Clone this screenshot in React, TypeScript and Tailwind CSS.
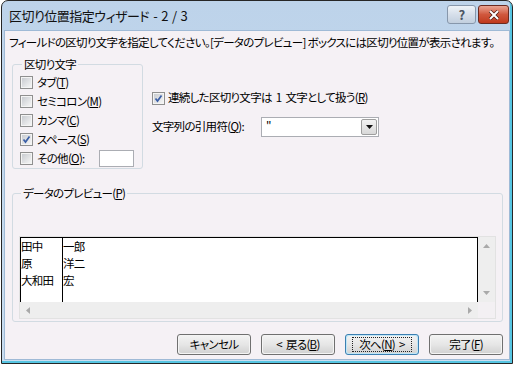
import React from "react";

const F = "font-['Noto_Sans_CJK_JP',sans-serif] [font-feature-settings:'palt']";

function Check({ checked = false }: { checked?: boolean }) {
  return (
    <span className="relative flex h-[13px] w-[13px] shrink-0 items-center justify-center border border-[#8f8f8f] bg-[#f4f4f4]">
      <span className="h-[9px] w-[9px] bg-gradient-to-br from-[#c9ccd1] to-[#f5f5f5]" />
      {checked && (
        <svg className="absolute left-0 top-0" width="11" height="11" viewBox="0 0 11 11">
          <path d="M2.5 5.5 L4.5 8 L8.5 2.5" fill="none" stroke="#3a5ea6" strokeWidth="1.7" />
        </svg>
      )}
    </span>
  );
}

function Mn({ pre, k, post = ")" }: { pre: string; k: string; post?: string }) {
  return (
    <span className="whitespace-nowrap">
      {pre}(<u className="underline underline-offset-[1px]">{k}</u>{post}
    </span>
  );
}

function Sp() {
  return <span className="inline-block w-[4px]" />;
}

function Btn({ children, focus = false }: { children: React.ReactNode; focus?: boolean }) {
  return (
    <div
      className={
        "flex h-[21px] w-[74px] items-center justify-center rounded-[3px] border p-[1px] " +
        (focus ? "border-[#3c7fb1] bg-[#bfe6f7]" : "border-[#707070] bg-[#f4f4f4]")
      }
    >
      <div className="flex h-full w-full items-center justify-center rounded-[2px] bg-gradient-to-b from-[#f2f2f2] via-[#e6e6e6] to-[#d3d3d3]">
        <span
          className={
            focus
              ? "whitespace-nowrap border border-dotted border-[#222] px-[6px] leading-[13px]"
              : "whitespace-nowrap leading-[13px]"
          }
        >
          {children}
        </span>
      </div>
    </div>
  );
}

function TriUp() {
  return (
    <svg width="7" height="4" viewBox="0 0 7 4">
      <path d="M0 4 L3.5 0 L7 4 Z" fill="#a9a9a9" />
    </svg>
  );
}
function TriDown() {
  return (
    <svg width="7" height="4" viewBox="0 0 7 4">
      <path d="M0 0 L3.5 4 L7 0 Z" fill="#a9a9a9" />
    </svg>
  );
}
function TriLeft() {
  return (
    <svg width="4" height="7" viewBox="0 0 4 7">
      <path d="M4 0 L0 3.5 L4 7 Z" fill="#a9a9a9" />
    </svg>
  );
}
function TriRight() {
  return (
    <svg width="4" height="7" viewBox="0 0 4 7">
      <path d="M0 0 L4 3.5 L0 7 Z" fill="#a9a9a9" />
    </svg>
  );
}

export default function App() {
  const rows = [
    ["田中", "一郎"],
    ["原", "洋二"],
    ["大和田", "宏"],
  ];
  return (
    <div className={"h-[367px] w-[516px] bg-white text-[11.5px] tracking-[-0.7px] text-black " + F}>
      <div className="ml-[1px] flex h-[364px] w-[512px] flex-col rounded-t-[7px] border border-[#262626] bg-gradient-to-b from-[#bdd3ea] to-[#c9ddf0] px-[2px] pb-[3px] shadow-[inset_-2px_-2px_0_#56c5e2]">
        {/* title bar */}
        <div className="flex h-[29px] shrink-0 items-start justify-between pl-[5px] pr-[1px]">
          <div className="mt-[7px] whitespace-nowrap text-[13px] leading-[16px] tracking-[-0.5px] text-[#111]">
            区切り位置指定ウィザード<Sp />-<Sp />2<Sp />/<Sp />3
          </div>
          <div className="mt-[4px] flex gap-[2px]">
            <div className="flex h-[19px] w-[29px] items-center justify-center rounded-[3px] border border-[#8797ab] bg-gradient-to-b from-[#eef3f8] via-[#d6dfea] to-[#c2cfde] text-[13px] font-bold leading-none text-[#4b5563]">
              ?
            </div>
            <div className="flex h-[19px] w-[31px] items-center justify-center rounded-[3px] border border-[#6b2a20] bg-gradient-to-b from-[#e9a493] via-[#d0573d] to-[#c0391c]">
              <svg width="12" height="10" viewBox="0 0 12 10">
                <path d="M2 1 L10 9 M10 1 L2 9" stroke="#4a1a10" strokeWidth="3.4" />
                <path d="M2 1 L10 9 M10 1 L2 9" stroke="#ffffff" strokeWidth="2" />
              </svg>
            </div>
          </div>
        </div>

        {/* client */}
        <div className="flex flex-1 flex-col border border-[#9fbad6] bg-[#f5f1f5]">
          <div className="ml-[4px] mt-[3px] h-[16px] whitespace-nowrap leading-[16px]">
            フィールドの区切り文字を指定してください。[データのプレビュー] ボックスには区切り位置が表示されます。
          </div>

          <div className="mt-[7px] flex items-start">
            <fieldset className="ml-[7px] h-[112px] w-[131px] rounded-[3px] border border-[#d2dbe2] pl-[7px] pt-[2px]">
              <legend className="ml-[2px] px-[2px] leading-[14px]">区切り文字</legend>
              <div className="flex h-[19px] items-center gap-[4px]">
                <Check />
                <Mn pre="タブ" k="T" />
              </div>
              <div className="flex h-[19px] items-center gap-[4px]">
                <Check />
                <Mn pre="セミコロン" k="M" />
              </div>
              <div className="flex h-[19px] items-center gap-[4px]">
                <Check />
                <Mn pre="カンマ" k="C" />
              </div>
              <div className="flex h-[19px] items-center gap-[4px]">
                <Check checked />
                <Mn pre="スペース" k="S" />
              </div>
              <div className="flex h-[19px] items-center gap-[4px]">
                <Check />
                <Mn pre="その他" k="O" post="):" />
                <div className="ml-auto mr-[8px] h-[17px] w-[35px] border border-[#abadb3] bg-white" />
              </div>
            </fieldset>

            <div className="ml-[9px] flex flex-col">
              <div className="mt-[33px] flex h-[16px] items-center gap-[3px]">
                <Check checked />
                <span className="whitespace-nowrap">
                  連続した区切り文字は<Sp />1<Sp />文字として扱う(<u>R</u>)
                </span>
              </div>
              <div className="mt-[11px] flex h-[20px] items-center">
                <span className="w-[109px] whitespace-nowrap">
                  文字列の引用符(<u>Q</u>):
                </span>
                <div className="flex h-[20px] w-[118px] border border-[#abadb3] bg-white">
                  <div className="flex-1 pl-[4px] leading-[14px]">"</div>
                  <div className="m-[1px] flex w-[16px] items-center justify-center rounded-[2px] border border-[#9e9e9e] bg-gradient-to-b from-[#f3f3f3] to-[#d8d8d8]">
                    <svg width="7" height="4" viewBox="0 0 7 4">
                      <path d="M0 0 L7 0 L3.5 4 Z" fill="#111" />
                    </svg>
                  </div>
                </div>
              </div>
            </div>
          </div>

          <fieldset className="ml-[7px] mt-[17px] h-[136px] w-[491px] rounded-[3px] border border-[#d2dbe2] pl-[6px]">
            <legend className="ml-[2px] px-[2px] leading-[14px]">
              データのプレビュー(<u>P</u>)
            </legend>
            <div className="mt-[36px] flex h-[83px] w-[477px] flex-col border border-[#e2e2e2]">
              <div className="flex h-[65px]">
                <div className="flex flex-1 border-l border-r border-t border-black bg-white">
                  <div className="w-[42px] border-r border-black">
                    {rows.map((r) => (
                      <div key={r[0]} className="h-[17px] leading-[17px]">
                        {r[0]}
                      </div>
                    ))}
                  </div>
                  <div className="flex-1">
                    {rows.map((r) => (
                      <div key={r[1]} className="h-[17px] leading-[17px]">
                        {r[1]}
                      </div>
                    ))}
                  </div>
                </div>
                <div className="flex w-[17px] flex-col items-center justify-between bg-[#eeeeee] px-[1px] py-[7px]">
                  <TriUp />
                  <TriDown />
                </div>
              </div>
              <div className="flex h-[16px]">
                <div className="flex flex-1 items-center justify-between bg-[#eeeeee] px-[6px]">
                  <TriLeft />
                  <TriRight />
                </div>
                <div className="w-[17px] bg-[#f3f0f3]" />
              </div>
            </div>
          </fieldset>

          <div className="mr-[6px] mt-[12px] flex justify-end gap-[10px]">
            <Btn>キャンセル</Btn>
            <Btn>
              &lt;<Sp />戻る(<u>B</u>)
            </Btn>
            <Btn focus>
              次へ(<u>N</u>)<Sp />&gt;
            </Btn>
            <Btn>
              完了(<u>F</u>)
            </Btn>
          </div>
        </div>
      </div>
    </div>
  );
}
